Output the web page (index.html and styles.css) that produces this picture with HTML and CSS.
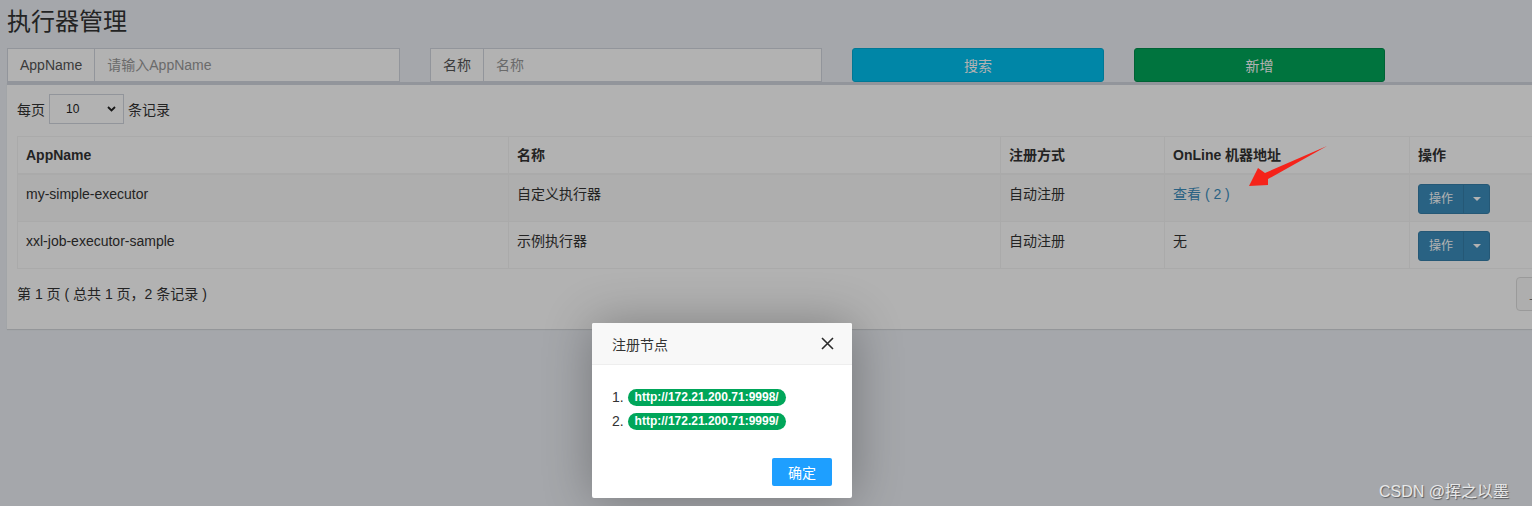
FILE: index.html
```html
<!DOCTYPE html>
<html>
<head>
    <meta charset="utf-8">
    <title>执行器管理</title>
    <link rel="stylesheet" href="styles.css">
</head>
<body>
    <div class="page">
        <h1 class="page-title">执行器管理</h1>
        <div class="filter-row">
            <div class="input-group">
                <span class="addon">AppName</span>
                <input type="text" class="form-input" placeholder="请输入AppName">
            </div>
            <div class="input-group">
                <span class="addon">名称</span>
                <input type="text" class="form-input" placeholder="名称">
            </div>
            <button class="btn btn-info">搜索</button>
            <button class="btn btn-success">新增</button>
        </div>

        <div class="box">
            <div class="length-row">
                <span>每页</span>
                <div class="select-box">
                    <span>10</span>
                    <svg width="9" height="6" viewBox="0 0 9 6"><path d="M1 1l3.5 3.5L8 1" fill="none" stroke="#222" stroke-width="1.8"/></svg>
                </div>
                <span>条记录</span>
            </div>

            <table class="data-table">
                <colgroup>
                    <col style="width:491px">
                    <col style="width:492px">
                    <col style="width:164px">
                    <col style="width:245px">
                    <col>
                </colgroup>
                <thead>
                    <tr>
                        <th>AppName</th>
                        <th>名称</th>
                        <th>注册方式</th>
                        <th>OnLine 机器地址</th>
                        <th>操作</th>
                    </tr>
                </thead>
                <tbody>
                    <tr class="odd">
                        <td>my-simple-executor</td>
                        <td>自定义执行器</td>
                        <td>自动注册</td>
                        <td><a class="link">查看 ( 2 )</a></td>
                        <td>
                            <div class="btn-split">
                                <span class="btn-main">操作</span>
                                <span class="btn-caret"></span>
                            </div>
                        </td>
                    </tr>
                    <tr>
                        <td>xxl-job-executor-sample</td>
                        <td>示例执行器</td>
                        <td>自动注册</td>
                        <td>无</td>
                        <td>
                            <div class="btn-split">
                                <span class="btn-main">操作</span>
                                <span class="btn-caret"></span>
                            </div>
                        </td>
                    </tr>
                </tbody>
            </table>

            <div class="table-footer">
                <div class="table-info">第 1 页 ( 总共 1 页，2 条记录 )</div>
                <ul class="pagination">
                    <li>上页</li>
                    <li class="active">1</li>
                    <li>下页</li>
                </ul>
            </div>
        </div>
    </div>

    <div class="shade"></div>

    <svg class="annot-arrow" width="100" height="60" viewBox="0 0 100 60">
        <polygon points="9,46 18,28 25,33 87,6 28,39 28,45" fill="#f5231a"/>
    </svg>

    <div class="layer">
        <div class="layer-title">
            <span>注册节点</span>
            <svg class="layer-close" width="13" height="13" viewBox="0 0 13 13"><path d="M1 1l11 11M12 1L1 12" stroke="#2b2b2b" stroke-width="1.6"/></svg>
        </div>
        <div class="layer-content">
            <div class="node-item">1. <span class="badge">http://172.21.200.71:9998/</span></div>
            <div class="node-item">2. <span class="badge">http://172.21.200.71:9999/</span></div>
        </div>
        <div class="layer-btns">
            <button class="layer-btn">确定</button>
        </div>
    </div>

    <div class="watermark">CSDN @挥之以墨</div>
</body>
</html>
```

FILE: styles.css
```css
html, body {
    margin: 0;
    padding: 0;
    overflow: hidden;
}

body {
    width: 1532px;
    height: 506px;
    background: #ecf0f5;
    font-family: "Liberation Sans", "Noto Sans CJK SC", sans-serif;
    font-size: 14px;
    color: #333;
    position: relative;
}

.page {
    width: 1720px;
}

.page-title {
    margin: 0;
    height: 48px;
    padding-left: 7px;
    font-size: 24px;
    font-weight: normal;
    line-height: 43px;
    color: #333;
}

.filter-row {
    display: grid;
    grid-template-columns: 393px 392px 252px 251px;
    column-gap: 30px;
    padding-left: 7px;
    height: 34px;
}

.input-group {
    display: flex;
    height: 34px;
    box-sizing: border-box;
    border: 1px solid #d2d6de;
    background: #fff;
}

.addon {
    padding: 0 12px;
    line-height: 32px;
    color: #555;
    border-right: 1px solid #d2d6de;
}

.form-input {
    flex: 1;
    min-width: 0;
    border: 0;
    outline: 0;
    padding: 0 12px;
    font-family: inherit;
    font-size: 14px;
    color: #555;
    background: transparent;
}

.form-input::placeholder {
    color: #999;
}

.btn {
    height: 34px;
    border-radius: 3px;
    font-family: inherit;
    font-size: 14px;
    color: #fff;
    border: 1px solid transparent;
}

.btn-info {
    background: #00c0ef;
    border-color: #00acd6;
}

.btn-success {
    background: #00a65a;
    border-color: #008d4c;
}

.box {
    margin-left: 7px;
    background: #fff;
    border-top: 3px solid #d2d6de;
    padding: 9px 10px 18px;
    box-shadow: 0 1px 1px rgba(0,0,0,0.1);
}

.length-row {
    display: flex;
    align-items: center;
    gap: 4px;
    height: 30px;
    margin-bottom: 12px;
}

.select-box {
    display: flex;
    align-items: center;
    justify-content: space-between;
    width: 75px;
    height: 30px;
    box-sizing: border-box;
    border: 1px solid #d2d6de;
    padding: 0 7px 0 16px;
    font-size: 12px;
    color: #222;
}

.data-table {
    width: 1680px;
    table-layout: fixed;
    border-collapse: collapse;
    border: 1px solid #f4f4f4;
}

.data-table th,
.data-table td {
    border: 1px solid #f4f4f4;
    text-align: left;
    vertical-align: top;
    line-height: 20px;
    white-space: nowrap;
}

.data-table th {
    padding: 8px 8px;
    border-bottom-width: 2px;
    font-weight: bold;
}

.data-table td {
    padding: 9px 8px 7px;
    height: 30px;
}

.data-table tr.odd td {
    background: #f9f9f9;
}

.link {
    color: #3c8dbc;
}

.btn-split {
    display: inline-flex;
    height: 30px;
    border-radius: 3px;
    overflow: hidden;
    background: #3c8dbc;
    border: 1px solid #367fa9;
    box-sizing: border-box;
    color: #fff;
    font-size: 12px;
}

.btn-main {
    width: 44px;
    text-align: center;
    line-height: 28px;
    border-right: 1px solid #367fa9;
}

.btn-caret {
    width: 25px;
    display: flex;
    align-items: center;
    justify-content: center;
}

.btn-caret::after {
    content: "";
    border-left: 4px solid transparent;
    border-right: 4px solid transparent;
    border-top: 4px solid #fff;
}

.table-footer {
    display: flex;
    align-items: center;
    margin-top: 8px;
    height: 34px;
}

.table-info {
    flex: 0 0 1500px;
    padding-bottom: 3px;
}

.pagination {
    display: flex;
    margin: 0;
    padding: 0;
    list-style: none;
}

.pagination li {
    height: 34px;
    box-sizing: border-box;
    padding: 0 12px;
    line-height: 32px;
    border: 1px solid #ddd;
    background: #fafafa;
    color: #777;
    margin-left: -1px;
}

.pagination li:first-child {
    border-radius: 4px 0 0 4px;
}

.shade {
    position: absolute;
    inset: 0;
    background: rgba(0,0,0,0.3);
}

.annot-arrow {
    position: absolute;
    left: 1240px;
    top: 140px;
}

.layer {
    position: absolute;
    left: 592px;
    top: 323px;
    width: 260px;
    background: #fff;
    border-radius: 2px;
    box-shadow: 1px 1px 50px rgba(0,0,0,0.3);
}

.layer-title {
    display: flex;
    align-items: center;
    justify-content: space-between;
    height: 42px;
    box-sizing: border-box;
    padding: 0 18px 0 20px;
    background: #f8f8f8;
    border-bottom: 1px solid #eee;
    border-radius: 2px 2px 0 0;
    color: #333;
}

.layer-content {
    padding: 20px;
}

.node-item {
    line-height: 24px;
    color: #333;
}

.badge {
    display: inline-block;
    padding: 2px 7px;
    line-height: 13px;
    border-radius: 9px;
    background: #00a65a;
    color: #fff;
    font-size: 12px;
    font-weight: bold;
    vertical-align: 1px;
}

.layer-btns {
    display: flex;
    justify-content: flex-end;
    padding: 5px 20px 12px;
}

.layer-btn {
    width: 60px;
    height: 28px;
    border: 0;
    border-radius: 2px;
    background: #1e9fff;
    color: #fff;
    font-family: inherit;
    font-size: 14px;
}

.watermark {
    position: absolute;
    left: 1379px;
    top: 478px;
    font-size: 16px;
    color: #e8e8e8;
    text-shadow: 1px 1px 1px rgba(0,0,0,0.45);
}
```
